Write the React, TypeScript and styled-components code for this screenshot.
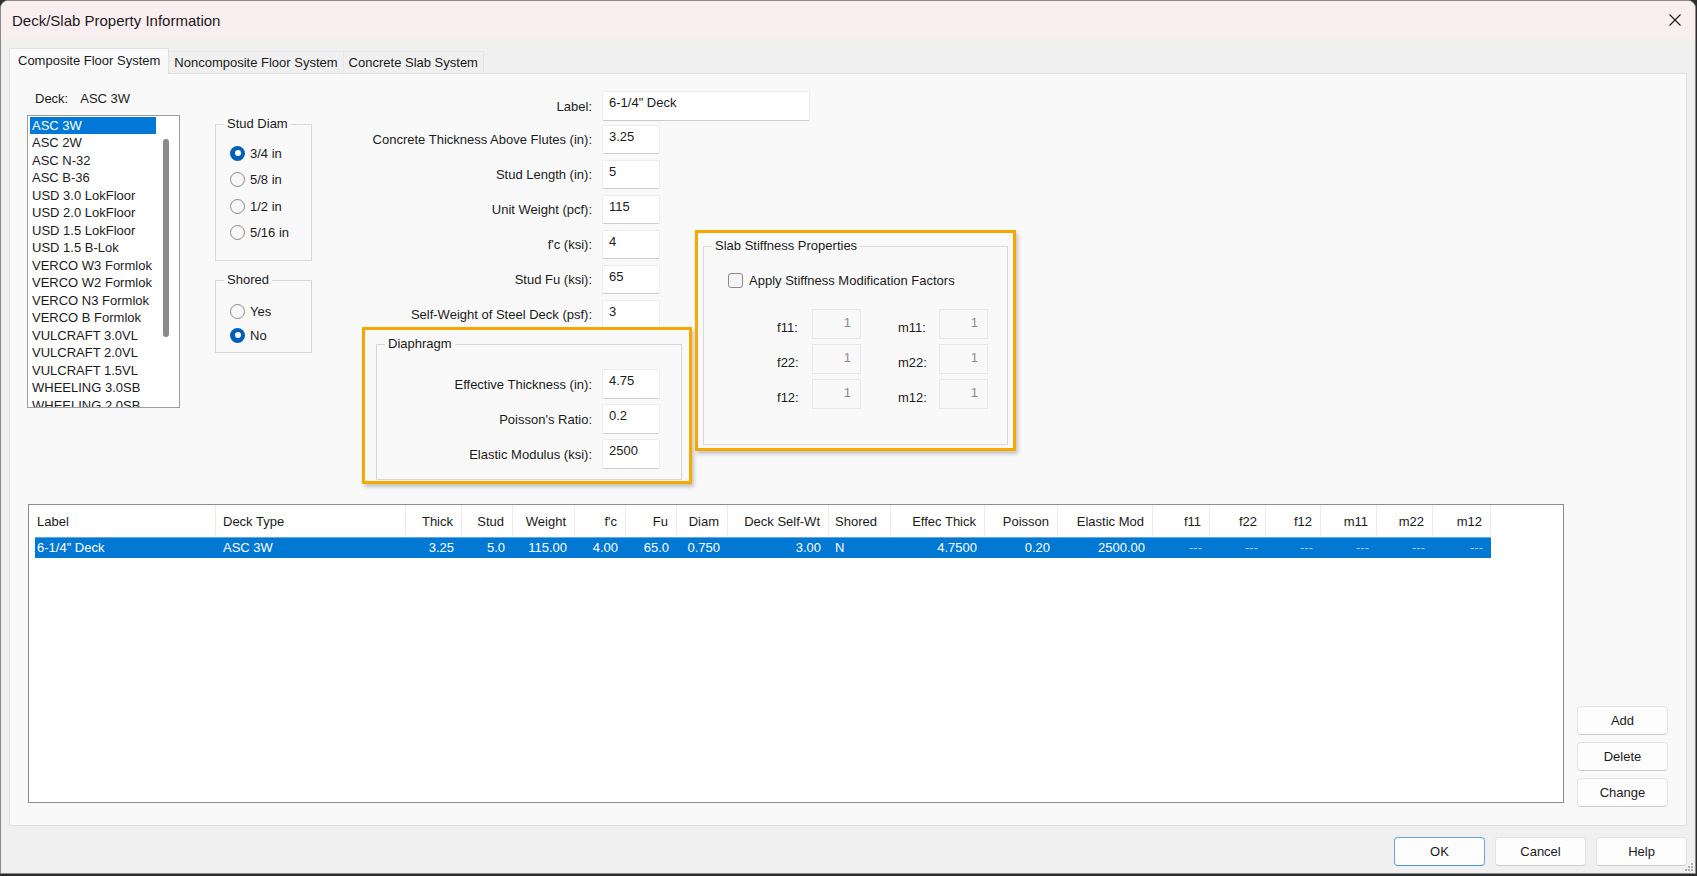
import React from 'react';
import styled, { createGlobalStyle } from 'styled-components';

const GlobalStyle = createGlobalStyle`
  html, body {
    margin: 0;
    padding: 0;
    background: #2b2b2b;
  }
  body {
    font-family: "Liberation Sans", Arial, sans-serif;
    font-size: 13px;
    color: #1b1b1b;
  }
  * {
    box-sizing: border-box;
  }
`;

const Window = styled.div`
  width: 1696px;
  height: 874px;
  display: flex;
  flex-direction: column;
  background: #f0f0f0;
  border: 1px solid #8a8a8a;
  border-radius: 8px 8px 0 0;
  overflow: hidden;
  position: relative;
`;

const TitleBar = styled.div`
  height: 38px;
  flex: 0 0 38px;
  display: flex;
  align-items: center;
  justify-content: space-between;
  padding: 0 14px 0 11px;
  background: #f9eef0;
  font-size: 15px;
  color: #1a1a1a;
`;

const CloseIcon = styled.svg`
  width: 12px;
  height: 12px;
  display: block;
`;

const Body = styled.div`
  flex: 1;
  display: flex;
  flex-direction: column;
  padding: 9px 8px 0 8px;
  min-height: 0;
`;

const TabStrip = styled.div`
  display: flex;
  align-items: flex-end;
  height: 25px;
`;

const Tab = styled.div<{ $active?: boolean }>`
  position: relative;
  z-index: ${p => (p.$active ? 2 : 1)};
  height: ${p => (p.$active ? '26px' : '22px')};
  margin-bottom: ${p => (p.$active ? '-1px' : '0')};
  padding: ${p => (p.$active ? '0 8px 2px' : '0 5px')};
  display: flex;
  align-items: center;
  background: ${p => (p.$active ? '#f9f9f9' : '#f0f0f0')};
  border: 1px solid ${p => (p.$active ? '#e0e0e0' : '#e6e6e6')};
  border-bottom: none;
  margin-left: ${p => (p.$active ? '0' : '-1px')};
  white-space: nowrap;
`;

const TabPanel = styled.div`
  flex: 1;
  display: flex;
  flex-direction: column;
  background: #f9f9f9;
  border: 1px solid #e0e0e0;
  padding: 17px 18px 18px 17px;
  min-height: 0;
`;

const TopSection = styled.div`
  display: flex;
  align-items: flex-start;
`;

const DeckColumn = styled.div`
  width: 153px;
  margin-right: 35px;
  display: flex;
  flex-direction: column;
`;

const DeckCaption = styled.div`
  display: flex;
  gap: 12px;
  padding-left: 8px;
  line-height: 16px;
  margin-bottom: 8px;
`;

const ListBox = styled.div`
  height: 293px;
  display: flex;
  background: #ffffff;
  border: 1px solid #9c9c9c;
  overflow: hidden;
`;

const ListItems = styled.div`
  width: 128px;
  padding: 1px 0 0 2px;
  overflow: hidden;
`;

const ListItem = styled.div<{ $selected?: boolean }>`
  height: 17.47px;
  line-height: 17.47px;
  padding-left: 2px;
  white-space: nowrap;
  background: ${p => (p.$selected ? '#0078d7' : 'transparent')};
  color: ${p => (p.$selected ? '#ffffff' : '#1b1b1b')};
`;

const ScrollTrack = styled.div`
  flex: 1;
  padding: 23px 0 0 7px;
`;

const ScrollThumb = styled.div`
  width: 6px;
  height: 198px;
  border-radius: 3px;
  background: #8a8a8a;
`;

const GroupColumn = styled.div`
  width: 97px;
  margin-right: 50px;
  display: flex;
  flex-direction: column;
`;

const Group = styled.div<{ $top?: number; $pb?: number; $grow?: boolean }>`
  margin-top: ${p => p.$top ?? 0}px;
  border: 1px solid #d8d8d8;
  padding-bottom: ${p => p.$pb ?? 0}px;
  display: flex;
  flex-direction: column;
  ${p => (p.$grow ? 'flex: 1;' : '')}
`;

const GroupTitle = styled.div`
  margin: -9px 0 0 8px;
  padding: 0 3px;
  width: fit-content;
  line-height: 16px;
  background: #f9f9f9;
  white-space: nowrap;
`;

const RadioList = styled.div<{ $top: number }>`
  margin-top: ${p => p.$top}px;
  display: flex;
  flex-direction: column;
`;

const RadioRow = styled.div<{ $h: number }>`
  height: ${p => p.$h}px;
  display: flex;
  align-items: center;
  gap: 5px;
  padding-left: 14px;
`;

const RadioDot = styled.span<{ $checked?: boolean }>`
  width: 15px;
  height: 15px;
  border-radius: 50%;
  flex: 0 0 15px;
  display: flex;
  align-items: center;
  justify-content: center;
  background: ${p => (p.$checked ? '#005fb8' : '#f7f7f7')};
  border: ${p => (p.$checked ? 'none' : '1px solid #8a8a8a')};

  &::after {
    content: '';
    display: ${p => (p.$checked ? 'block' : 'none')};
    width: 6px;
    height: 6px;
    border-radius: 50%;
    background: #ffffff;
  }
`;

const FieldColumn = styled.div`
  width: 330px;
  margin-right: 3px;
  display: flex;
  flex-direction: column;
`;

const FieldList = styled.div`
  display: flex;
  flex-direction: column;
  gap: 6px;
`;

const FieldRow = styled.div<{ $h: number; $labelW: number; $mb?: number }>`
  height: ${p => p.$h}px;
  margin-bottom: ${p => p.$mb ?? 0}px;
  display: grid;
  grid-template-columns: ${p => p.$labelW}px 58px;
  column-gap: 10px;
  align-items: stretch;
`;

const FieldLabel = styled.div`
  display: flex;
  align-items: center;
  justify-content: flex-end;
  white-space: nowrap;
`;

const TextBox = styled.div<{ $w?: number }>`
  width: ${p => (p.$w ? `${p.$w}px` : '100%')};
  background: #ffffff;
  border: 1px solid #ececec;
  border-bottom-color: #cdcdcd;
  border-radius: 2px;
  padding: 3px 0 0 6px;
  line-height: 16px;
  white-space: nowrap;
`;

const Highlight = styled.div<{ $top?: number; $w: number; $h?: number; $pad: string }>`
  margin-top: ${p => p.$top ?? 0}px;
  width: ${p => p.$w}px;
  ${p => (p.$h ? `height: ${p.$h}px;` : '')}
  border: 3px solid #f5a900;
  padding: ${p => p.$pad};
  display: flex;
  flex-direction: column;
  box-shadow: 2px 3px 4px rgba(0, 0, 0, 0.22);
`;

const GroupFields = styled.div`
  margin-top: 17px;
  display: flex;
  flex-direction: column;
  gap: 5px;
`;

const CheckRow = styled.label`
  margin: 18px 0 0 24px;
  height: 16px;
  display: flex;
  align-items: center;
  gap: 6px;
`;

const CheckBox = styled.span`
  width: 15px;
  height: 15px;
  border: 1px solid #8a8a8a;
  border-radius: 3px;
  background: #f5f5f5;
`;

const FactorGrid = styled.div`
  margin: 21px 0 0 73px;
  display: grid;
  grid-template-columns: 35px 49px 78px 49px;
  grid-auto-rows: 30px;
  row-gap: 5px;
`;

const FactorLabel = styled.div<{ $indent?: number }>`
  align-self: end;
  padding: 0 0 3px ${p => p.$indent ?? 0}px;
  line-height: 16px;
`;

const FactorBox = styled.div`
  border: 1px solid #e6e6e6;
  padding: 5px 9px 0 0;
  line-height: 16px;
  text-align: right;
  color: #8c8c8c;
`;

const BottomRow = styled.div`
  flex: 1;
  margin-top: 20px;
  display: flex;
  align-items: flex-end;
  min-height: 0;
`;

const Table = styled.div`
  flex: 1;
  align-self: stretch;
  margin: 0 13px 4px 1px;
  background: #ffffff;
  border: 1px solid #8d8d8d;
  padding-left: 6px;
`;

const TableRow = styled.div<{ $header?: boolean }>`
  display: flex;
  width: fit-content;
  height: ${p => (p.$header ? '32px' : '21px')};
  background: ${p => (p.$header ? '#ffffff' : '#0078d4')};
  color: ${p => (p.$header ? '#1b1b1b' : '#ffffff')};
  ${p => (p.$header ? '' : 'box-shadow: inset 0 1px 0 #5ea6ea;')}
`;

const Cell = styled.div<{ $w: number; $align: 'left' | 'right'; $pad: number; $header?: boolean; $muted?: boolean }>`
  flex: 0 0 ${p => p.$w}px;
  display: flex;
  align-items: center;
  justify-content: ${p => (p.$align === 'right' ? 'flex-end' : 'flex-start')};
  padding: ${p => (p.$align === 'right' ? `0 ${p.$pad}px 0 0` : `0 0 0 ${p.$pad}px`)};
  ${p => (p.$header ? 'border-right: 1px solid #ececec;' : '')}
  ${p => (p.$muted ? 'color: rgba(255, 255, 255, 0.65);' : '')}
  white-space: nowrap;
  overflow: hidden;
`;

const SideButtons = styled.div`
  width: 91px;
  display: flex;
  flex-direction: column;
  gap: 7px;
`;

const Button = styled.div<{ $primary?: boolean }>`
  height: 29px;
  width: 91px;
  display: flex;
  align-items: center;
  justify-content: center;
  background: #fdfdfd;
  border: 1px solid ${p => (p.$primary ? '#6aa6df' : '#e3e3e3')};
  border-bottom-color: ${p => (p.$primary ? '#4f92d6' : '#cccccc')};
  border-radius: 4px;
  color: #1b1b1b;
`;

const Footer = styled.div`
  height: 47px;
  flex: 0 0 47px;
  display: flex;
  justify-content: flex-end;
  gap: 10px;
  padding: 11px 8px 0 0;
`;

const Grip = styled.svg`
  position: absolute;
  right: 1px;
  bottom: 1px;
  width: 10px;
  height: 10px;
`;

const deckTypes = [
  'ASC 3W',
  'ASC 2W',
  'ASC N-32',
  'ASC B-36',
  'USD 3.0 LokFloor',
  'USD 2.0 LokFloor',
  'USD 1.5 LokFloor',
  'USD 1.5 B-Lok',
  'VERCO W3 Formlok',
  'VERCO W2 Formlok',
  'VERCO N3 Formlok',
  'VERCO B Formlok',
  'VULCRAFT 3.0VL',
  'VULCRAFT 2.0VL',
  'VULCRAFT 1.5VL',
  'WHEELING 3.0SB',
  'WHEELING 2.0SB',
];

const fields = [
  ['Concrete Thickness Above Flutes (in):', '3.25'],
  ['Stud Length (in):', '5'],
  ['Unit Weight (pcf):', '115'],
  ["f'c (ksi):", '4'],
  ['Stud Fu (ksi):', '65'],
  ['Self-Weight of Steel Deck (psf):', '3'],
];

const diaphragm = [
  ['Effective Thickness (in):', '4.75', 30],
  ["Poisson's Ratio:", '0.2', 30],
  ['Elastic Modulus (ksi):', '2500', 30],
] as const;

type Col = { title: string; w: number; align: 'left' | 'right'; pad: number; value: string };

const columns: Col[] = [
  { title: 'Label', w: 181, align: 'left', pad: 2, value: '6-1/4" Deck' },
  { title: 'Deck Type', w: 190, align: 'left', pad: 7, value: 'ASC 3W' },
  { title: 'Thick', w: 56, align: 'right', pad: 8, value: '3.25' },
  { title: 'Stud', w: 51, align: 'right', pad: 8, value: '5.0' },
  { title: 'Weight', w: 62, align: 'right', pad: 8, value: '115.00' },
  { title: "f'c", w: 51, align: 'right', pad: 8, value: '4.00' },
  { title: 'Fu', w: 51, align: 'right', pad: 8, value: '65.0' },
  { title: 'Diam', w: 51, align: 'right', pad: 8, value: '0.750' },
  { title: 'Deck Self-Wt', w: 101, align: 'right', pad: 8, value: '3.00' },
  { title: 'Shored', w: 62, align: 'left', pad: 6, value: 'N' },
  { title: 'Effec Thick', w: 94, align: 'right', pad: 8, value: '4.7500' },
  { title: 'Poisson', w: 73, align: 'right', pad: 8, value: '0.20' },
  { title: 'Elastic Mod', w: 95, align: 'right', pad: 8, value: '2500.00' },
  { title: 'f11', w: 57, align: 'right', pad: 8, value: '---' },
  { title: 'f22', w: 56, align: 'right', pad: 8, value: '---' },
  { title: 'f12', w: 55, align: 'right', pad: 8, value: '---' },
  { title: 'm11', w: 56, align: 'right', pad: 8, value: '---' },
  { title: 'm22', w: 56, align: 'right', pad: 8, value: '---' },
  { title: 'm12', w: 58, align: 'right', pad: 8, value: '---' },
];

function Radio({ label, checked, h }: { label: string; checked?: boolean; h: number }) {
  return (
    <RadioRow $h={h}>
      <RadioDot $checked={checked} />
      <span>{label}</span>
    </RadioRow>
  );
}

export default function App() {
  return (
    <>
      <GlobalStyle />
      <Window>
        <TitleBar>
          <span>Deck/Slab Property Information</span>
          <CloseIcon viewBox="0 0 12 12">
            <path d="M0.5 0.5 L11.5 11.5 M11.5 0.5 L0.5 11.5" stroke="#1a1a1a" strokeWidth="1.1" fill="none" />
          </CloseIcon>
        </TitleBar>

        <Body>
          <TabStrip>
            <Tab $active>Composite Floor System</Tab>
            <Tab>Noncomposite Floor System</Tab>
            <Tab>Concrete Slab System</Tab>
          </TabStrip>

          <TabPanel>
            <TopSection>
              <DeckColumn>
                <DeckCaption>
                  <span>Deck:</span>
                  <span>ASC 3W</span>
                </DeckCaption>
                <ListBox>
                  <ListItems>
                    {deckTypes.map((d, i) => (
                      <ListItem key={d} $selected={i === 0}>
                        {d}
                      </ListItem>
                    ))}
                  </ListItems>
                  <ScrollTrack>
                    <ScrollThumb />
                  </ScrollTrack>
                </ListBox>
              </DeckColumn>

              <GroupColumn>
                <Group $top={33} $pb={14}>
                  <GroupTitle>Stud Diam</GroupTitle>
                  <RadioList $top={8}>
                    <Radio label="3/4 in" checked h={26.5} />
                    <Radio label="5/8 in" h={26.5} />
                    <Radio label="1/2 in" h={26.5} />
                    <Radio label="5/16 in" h={26.5} />
                  </RadioList>
                </Group>
                <Group $top={19} $pb={5}>
                  <GroupTitle>Shored</GroupTitle>
                  <RadioList $top={11}>
                    <Radio label="Yes" h={24} />
                    <Radio label="No" checked h={24} />
                  </RadioList>
                </Group>
              </GroupColumn>

              <FieldColumn>
                <FieldList>
                  <FieldRow $h={30} $labelW={230} $mb={-2}>
                    <FieldLabel>Label:</FieldLabel>
                    <TextBox $w={208}>6-1/4" Deck</TextBox>
                  </FieldRow>
                  {fields.map(([label, value]) => (
                    <FieldRow key={label} $h={29} $labelW={230}>
                      <FieldLabel>{label}</FieldLabel>
                      <TextBox>{value}</TextBox>
                    </FieldRow>
                  ))}
                </FieldList>

                <Highlight $top={-2} $w={330} $pad="14px 7px 1px 11px">
                  <Group $pb={10}>
                    <GroupTitle>Diaphragm</GroupTitle>
                    <GroupFields>
                      {diaphragm.map(([label, value, h]) => (
                        <FieldRow key={label} $h={h} $labelW={215}>
                          <FieldLabel>{label}</FieldLabel>
                          <TextBox>{value}</TextBox>
                        </FieldRow>
                      ))}
                    </GroupFields>
                  </Group>
                </Highlight>
              </FieldColumn>

              <Highlight $top={139} $w={321} $h={221} $pad="13px 5px 3px 5px">
                <Group $grow>
                  <GroupTitle>Slab Stiffness Properties</GroupTitle>
                  <CheckRow>
                    <CheckBox />
                    <span>Apply Stiffness Modification Factors</span>
                  </CheckRow>
                  <FactorGrid>
                    {['11', '22', '12'].map(n => (
                      <React.Fragment key={n}>
                        <FactorLabel>f{n}:</FactorLabel>
                        <FactorBox>1</FactorBox>
                        <FactorLabel $indent={37}>m{n}:</FactorLabel>
                        <FactorBox>1</FactorBox>
                      </React.Fragment>
                    ))}
                  </FactorGrid>
                </Group>
              </Highlight>
            </TopSection>

            <BottomRow>
              <Table>
                <TableRow $header>
                  {columns.map(c => (
                    <Cell key={c.title} $w={c.w} $align={c.align} $pad={c.pad} $header>
                      {c.title}
                    </Cell>
                  ))}
                </TableRow>
                <TableRow>
                  {columns.map(c => (
                    <Cell key={c.title} $w={c.w} $align={c.align} $pad={c.pad} $muted={c.value === '---'}>
                      {c.value}
                    </Cell>
                  ))}
                </TableRow>
              </Table>
              <SideButtons>
                <Button>Add</Button>
                <Button>Delete</Button>
                <Button>Change</Button>
              </SideButtons>
            </BottomRow>
          </TabPanel>
        </Body>

        <Footer>
          <Button $primary>OK</Button>
          <Button>Cancel</Button>
          <Button>Help</Button>
        </Footer>
        <Grip viewBox="0 0 10 10">
          {[
            [8, 2],
            [8, 5],
            [5, 5],
            [8, 8],
            [5, 8],
            [2, 8],
          ].map(([x, y]) => (
            <rect key={`${x}-${y}`} x={x - 1} y={y - 1} width="2" height="2" fill="#b0b0b0" />
          ))}
        </Grip>
      </Window>
    </>
  );
}
